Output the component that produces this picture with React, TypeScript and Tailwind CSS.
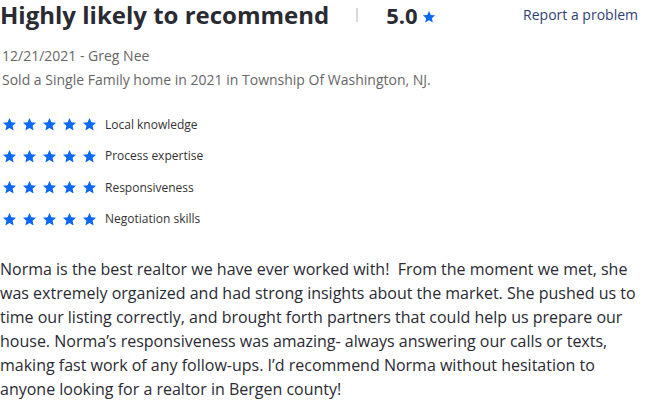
import React from "react";

const Star = ({ size = 15 }: { size?: number }) => (
  <svg width={size} height={size} viewBox="0 0 24 24" aria-hidden="true">
    <path
      fill="#0a68f5"
      d="M12 1.5l3.1 6.9 7.4.7-5.6 5 1.7 7.4L12 17.6 5.4 21.5l1.7-7.4-5.6-5 7.4-.7z"
    />
  </svg>
);

const ratings = [
  "Local knowledge",
  "Process expertise",
  "Responsiveness",
  "Negotiation skills",
];

export default function App() {
  return (
    <div
      className="w-[646px] h-[401px] overflow-hidden bg-white text-[#2a2a33]"
      style={{ fontFamily: '"Open Sans", "Noto Sans", sans-serif' }}
    >
      <div className="flex items-center h-[30px]">
        <h1 className="text-[24px] leading-[30px] font-bold text-[#2a2a33]">
          Highly likely to recommend
        </h1>
        <div className="w-[2px] h-[14px] bg-[#d9d9d9] ml-[27px]" />
        <div className="flex items-end ml-[28px]">
          <span className="text-[22px] leading-[30px] font-bold text-[#2a2a33]">5.0</span>
          <span className="ml-[4px] mb-[6px]">
            <Star size={14} />
          </span>
        </div>
        <a className="ml-auto mr-[8px] text-[14px] leading-[28px] text-[#2f3f75]">
          Report a problem
        </a>
      </div>

      <div className="mt-[14px] pl-[2px] text-[14px] leading-[24px] text-[#666666]">
        <div>12/21/2021 - Greg Nee</div>
        <div>Sold a Single Family home in 2021 in Township Of Washington, NJ.</div>
      </div>

      <div className="mt-[24px] flex flex-col gap-[14.5px] pl-[2px]">
        {ratings.map((r) => (
          <div key={r} className="flex items-center h-[17px]">
            <div className="flex gap-[5px]">
              {[0, 1, 2, 3, 4].map((i) => (
                <Star key={i} size={15} />
              ))}
            </div>
            <span className="ml-[8px] text-[12px] text-[#333333]">{r}</span>
          </div>
        ))}
      </div>

      <p className="mt-[29px] text-[16px] leading-[24px] text-[#2a2a33]">
        Norma is the best realtor we have ever worked with!&nbsp; From the moment we met, she was
        extremely organized and had strong insights about the market. She pushed us to time our
        listing correctly, and brought forth partners that could help us prepare our house.
        Norma’s responsiveness was amazing- always answering our calls or texts, making fast work
        of any follow-ups. I’d recommend Norma without hesitation to anyone looking for a realtor
        in Bergen county!
      </p>
    </div>
  );
}
